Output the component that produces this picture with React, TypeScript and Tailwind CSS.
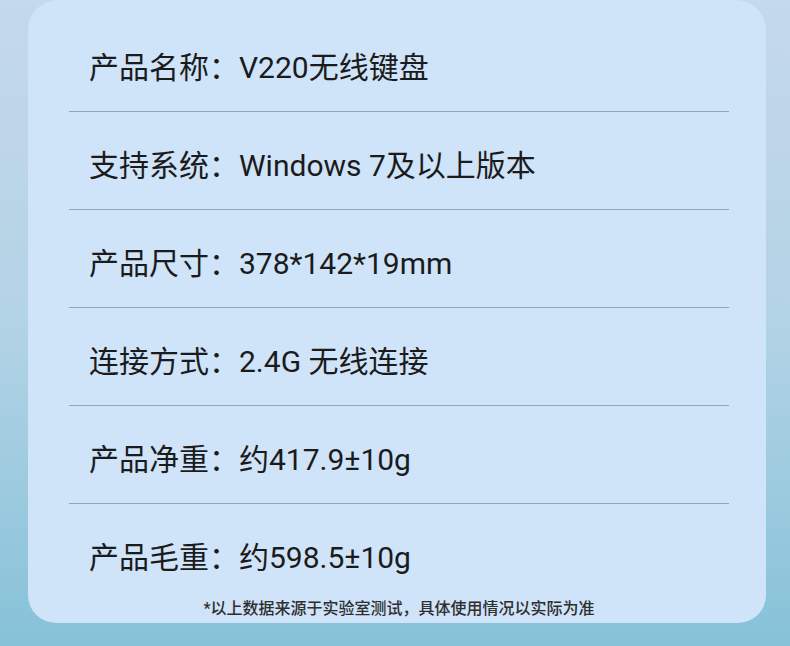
const specs = [
  { label: '产品名称：', value: 'V220无线键盘' },
  { label: '支持系统：', value: 'Windows 7及以上版本' },
  { label: '产品尺寸：', value: '378*142*19mm' },
  { label: '连接方式：', value: '2.4G 无线连接' },
  { label: '产品净重：', value: '约417.9±10g' },
  { label: '产品毛重：', value: '约598.5±10g' },
]

export default function App() {
  return (
    <div
      className="w-[790px] h-[646px] overflow-hidden bg-gradient-to-b from-[#c5d8ec] via-[#b3d3e6] to-[#86c2d8] pl-[28px] pr-[24px]"
      style={{ fontFamily: 'Roboto, "Noto Sans CJK SC", sans-serif' }}
    >
      <div className="h-[623px] rounded-b-[28px] rounded-t-[30px] bg-[#cfe3f9] pl-[41px] pr-[37px] pt-[46px]">
        {specs.map((s, i) => (
          <div key={i}>
            <div className="h-[44px] pl-[20px] flex items-center text-[30px] leading-none text-[#1b1b1b] whitespace-nowrap">
              <span>{s.label}</span>
              <span>{s.value}</span>
            </div>
            {i < specs.length - 1 && (
              <div className="mt-[21px] mb-[32px] h-px bg-[#8ea5bd]" />
            )}
          </div>
        ))}
        <p className="mt-[21px] text-center text-[16px] leading-none font-medium text-[#2e2e2e]">
          *以上数据来源于实验室测试，具体使用情况以实际为准
        </p>
      </div>
    </div>
  )
}
